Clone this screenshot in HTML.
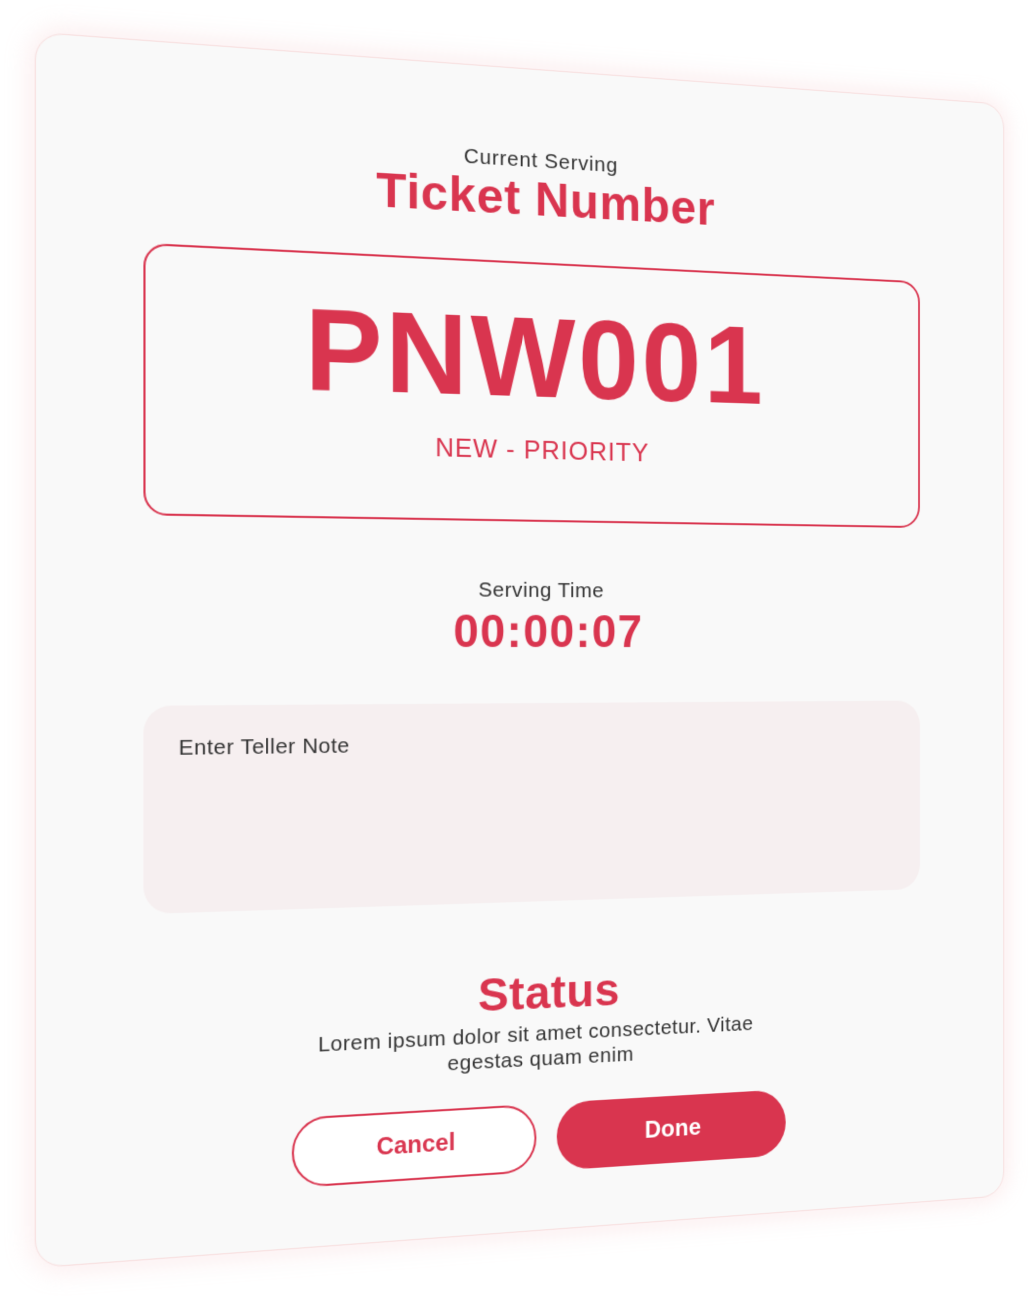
<!DOCTYPE html>
<html><head><meta charset="utf-8"><style>
html,body{margin:0;padding:0;background:#fff;width:1033px;height:1296px;overflow:hidden;font-family:"Liberation Sans",sans-serif;}
.card{position:absolute;left:50.5px;top:70px;width:997px;height:1160px;background:#f9f9f9;border-radius:26px;
box-shadow:0 0 22px 6px rgba(240,180,185,0.22);border:1px solid #f7dede;box-sizing:border-box;
transform:perspective(2000px) rotateY(14.4deg);transform-origin:50% 50%;}
.c{position:absolute;left:0;width:100%;text-align:center;}
.red{color:#d9354f;}
.box{position:absolute;left:99px;top:192px;width:800px;height:259px;border:2.5px solid #d9354f;border-radius:22px;box-sizing:border-box;}
.note{position:absolute;left:99px;top:632px;width:800px;height:198px;background:#f6eff0;border-radius:26px;}
.btn{position:absolute;top:1032px;height:68px;width:244px;border-radius:34px;box-sizing:border-box;font-weight:bold;font-size:24px;line-height:64px;text-align:center;}
</style></head><body>
<div class="card">
 <div class="c" style="top:79px;font-size:21px;letter-spacing:0.8px;color:#333;left:-8px;">Current Serving</div>
 <div class="c red" style="top:101px;font-size:49px;font-weight:bold;letter-spacing:0.8px;">Ticket Number</div>
 <div class="box"></div>
 <div class="c red" style="top:222px;font-size:114px;font-weight:bold;letter-spacing:3px;left:-8px;">PNW001</div>
 <div class="c red" style="top:364px;font-size:26px;letter-spacing:1px;left:-6px;">NEW - PRIORITY</div>
 <div class="c" style="top:508px;font-size:21px;letter-spacing:0.6px;color:#333;left:-8px;">Serving Time</div>
 <div class="c red" style="top:533px;font-size:46px;font-weight:bold;letter-spacing:1.5px;">00:00:07</div>
 <div class="note"></div>
 <div style="position:absolute;left:132px;top:661px;font-size:21px;letter-spacing:0.5px;color:#333;">Enter Teller Note</div>
 <div class="c red" style="top:893px;font-size:47px;font-weight:bold;letter-spacing:0.5px;">Status</div>
 <div class="c" style="top:950px;font-size:21px;letter-spacing:0.5px;color:#333;line-height:25px;left:-8px;">Lorem ipsum dolor sit amet consectetur. Vitae<br>egestas quam enim</div>
 <div class="btn red" style="left:240px;border:2px solid #d9354f;background:#fff;">Cancel</div>
 <div class="btn" style="left:505px;background:#d9354f;color:#fff;line-height:68px;">Done</div>
</div>
</body></html>
